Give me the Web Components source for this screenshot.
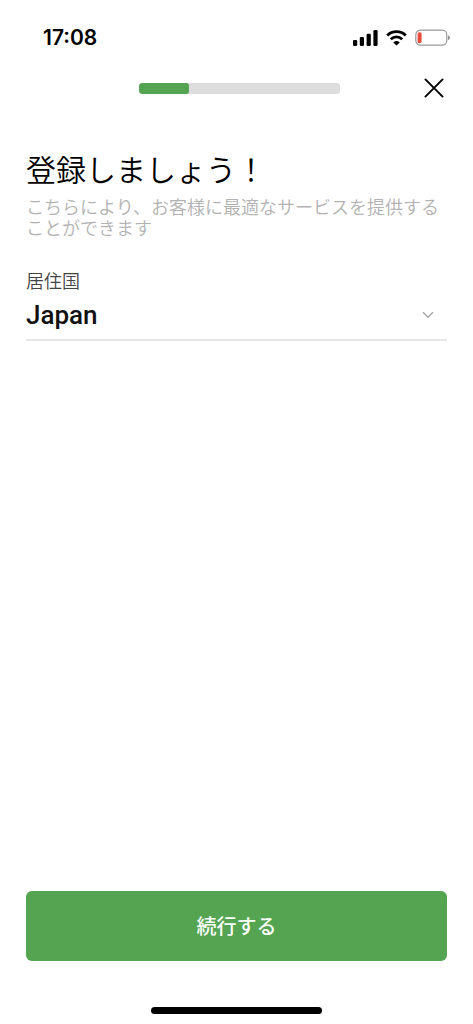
<!DOCTYPE html>
<html lang="ja">
<head>
<meta charset="utf-8">
<meta name="viewport" content="width=device-width, initial-scale=1">
<title>登録</title>
<style>
html, body { margin: 0; height: 100%; background: #fff; }
body { font-family: Roboto, "Noto Sans CJK JP", sans-serif; color: #111; }
</style>
</head>
<body>
<signup-screen>
  <status-bar slot="top">17:08</status-bar>
  <step-header slot="top" value="1" max="4"></step-header>
  <page-intro>
    <span slot="title">登録しましょう！</span>
    こちらにより、お客様に最適なサービスを提供することができます
  </page-intro>
  <select-field label="居住国" value="Japan"></select-field>
  <primary-button slot="bottom">続行する</primary-button>
  <home-indicator slot="bottom"></home-indicator>
</signup-screen>
<script>
class BaseElement extends HTMLElement {
  constructor() {
    super();
    this.attachShadow({ mode: 'open' });
  }
  connectedCallback() {
    this.shadowRoot.innerHTML = '<style>*{box-sizing:border-box}</style>' + this.render();
  }
}

customElements.define('signup-screen', class extends BaseElement {
  render() {
    return `<style>
      :host { display: flex; flex-direction: column; min-height: 100%; }
      main { flex: 1; padding: 36px 26px 24px; }
    </style>
    <slot name="top"></slot>
    <main><slot></slot></main>
    <slot name="bottom"></slot>`;
  }
});

customElements.define('status-bar', class extends BaseElement {
  render() {
    return `<style>
      :host { display: flex; justify-content: space-between; align-items: center;
        height: 64px; padding: 12px 23px 0 43px; box-sizing: border-box; color: #000;
        font: 600 21px/24px Inter, sans-serif; }
      .icons { display: flex; align-items: center; gap: 8px; }
      svg { display: block; }
    </style>
    <span><slot></slot></span>
    <div class="icons">
      <svg width="26" height="16" viewBox="0 0 26 16" aria-hidden="true">
        <rect x="1" y="10" width="4.2" height="6" rx="1.3"/>
        <rect x="7.8" y="7" width="4.2" height="9" rx="1.3"/>
        <rect x="14.6" y="3.8" width="4.2" height="12.2" rx="1.3"/>
        <rect x="21.4" y="0" width="4.2" height="16" rx="1.3"/>
      </svg>
      <svg width="21" height="16" viewBox="0 0 21 16" aria-hidden="true">
        <path d="M1.2 5.4a13.4 13.4 0 0 1 18.6 0M4.8 9.2a8.2 8.2 0 0 1 11.4 0" fill="none" stroke="#000" stroke-width="2.8"/>
        <path d="M10.5 15.6 7.2 12.4a5 5 0 0 1 6.6 0z"/>
      </svg>
      <svg width="35" height="18" viewBox="0 0 35 18" aria-hidden="true">
        <rect x=".8" y="1.2" width="31" height="15" rx="4.6" fill="none" stroke="#999" stroke-width="1.2"/>
        <rect x="2.6" y="3.2" width="4" height="11" rx="1.8" fill="#eb4d3d"/>
        <path d="M33.2 6.2v5a2.8 2.8 0 0 0 0-5z" fill="#777"/>
      </svg>
    </div>`;
  }
});

customElements.define('step-header', class extends BaseElement {
  render() {
    const pct = 100 * this.getAttribute('value') / this.getAttribute('max');
    return `<style>
      :host { display: grid; grid-template-columns: 1fr 43% 1fr; align-items: center; height: 48px; padding-left: 6px; }
      .track { grid-column: 2; height: 11px; border-radius: 3px; background: #ddd; overflow: hidden; }
      .fill { width: ${pct}%; height: 100%; border-radius: 3px; background: #54a451; }
      button { justify-self: end; display: grid; place-items: center; width: 32px; height: 32px;
        margin-right: 23px; padding: 0; border: 0; background: none; cursor: pointer; }
    </style>
    <div class="track" role="progressbar" aria-valuenow="${pct}" aria-label="進行状況"><div class="fill"></div></div>
    <button type="button" aria-label="閉じる">
      <svg width="20" height="20" viewBox="0 0 20 20"><path d="M1.4 1.4l17.2 17.2M18.6 1.4L1.4 18.6" stroke="#000" stroke-width="1.9" stroke-linecap="round"/></svg>
    </button>`;
  }
});

customElements.define('page-intro', class extends BaseElement {
  render() {
    return `<style>
      :host { display: block; }
      h1 { margin: 0; font: 350 30px/40px "Noto Sans CJK JP", sans-serif; color: #000; }
      p { margin: 8px 0 0; font: 350 18px/21px "Noto Sans CJK JP", sans-serif; color: #b2b2b2; }
    </style>
    <h1><slot name="title"></slot></h1>
    <p><slot></slot></p>`;
  }
});

customElements.define('select-field', class extends BaseElement {
  render() {
    const value = this.getAttribute('value');
    return `<style>
      :host { display: block; margin-top: 32px; }
      label { display: block; font: 350 18px/20px "Noto Sans CJK JP", sans-serif; color: #444; }
      .box { display: grid; align-items: center; border-bottom: 2px solid #e6e6e6; }
      select, svg { grid-row: 1; grid-column: 1; }
      select { appearance: none; width: 100%; height: 49px; margin: 0; padding: 0; border: 0;
        background: none; font: 500 26px/32px Roboto, sans-serif; color: #111; }
      svg { justify-self: end; margin-right: 13px; pointer-events: none; }
    </style>
    <label for="field">${this.getAttribute('label')}</label>
    <div class="box">
      <select id="field"><option>${value}</option></select>
      <svg width="12" height="8" viewBox="0 0 12 8"><path d="M1 1.2l5 5 5-5" fill="none" stroke="#aaa" stroke-width="1.5"/></svg>
    </div>`;
  }
});

customElements.define('primary-button', class extends BaseElement {
  render() {
    return `<style>
      :host { display: block; padding: 0 26px; }
      button { display: block; width: 100%; height: 70px; padding: 0; border: 0; border-radius: 6px;
        background: #54a451; color: #fff; font: 500 20px/28px "Noto Sans CJK JP", sans-serif; cursor: pointer; }
    </style>
    <button type="button"><slot></slot></button>`;
  }
});

customElements.define('home-indicator', class extends BaseElement {
  render() {
    return `<style>
      :host { display: block; padding: 46px 0 10px; }
      div { width: 36%; height: 7px; margin: 0 auto; border-radius: 4px; background: #000; }
    </style><div></div>`;
  }
});
</script>
</body>
</html>
